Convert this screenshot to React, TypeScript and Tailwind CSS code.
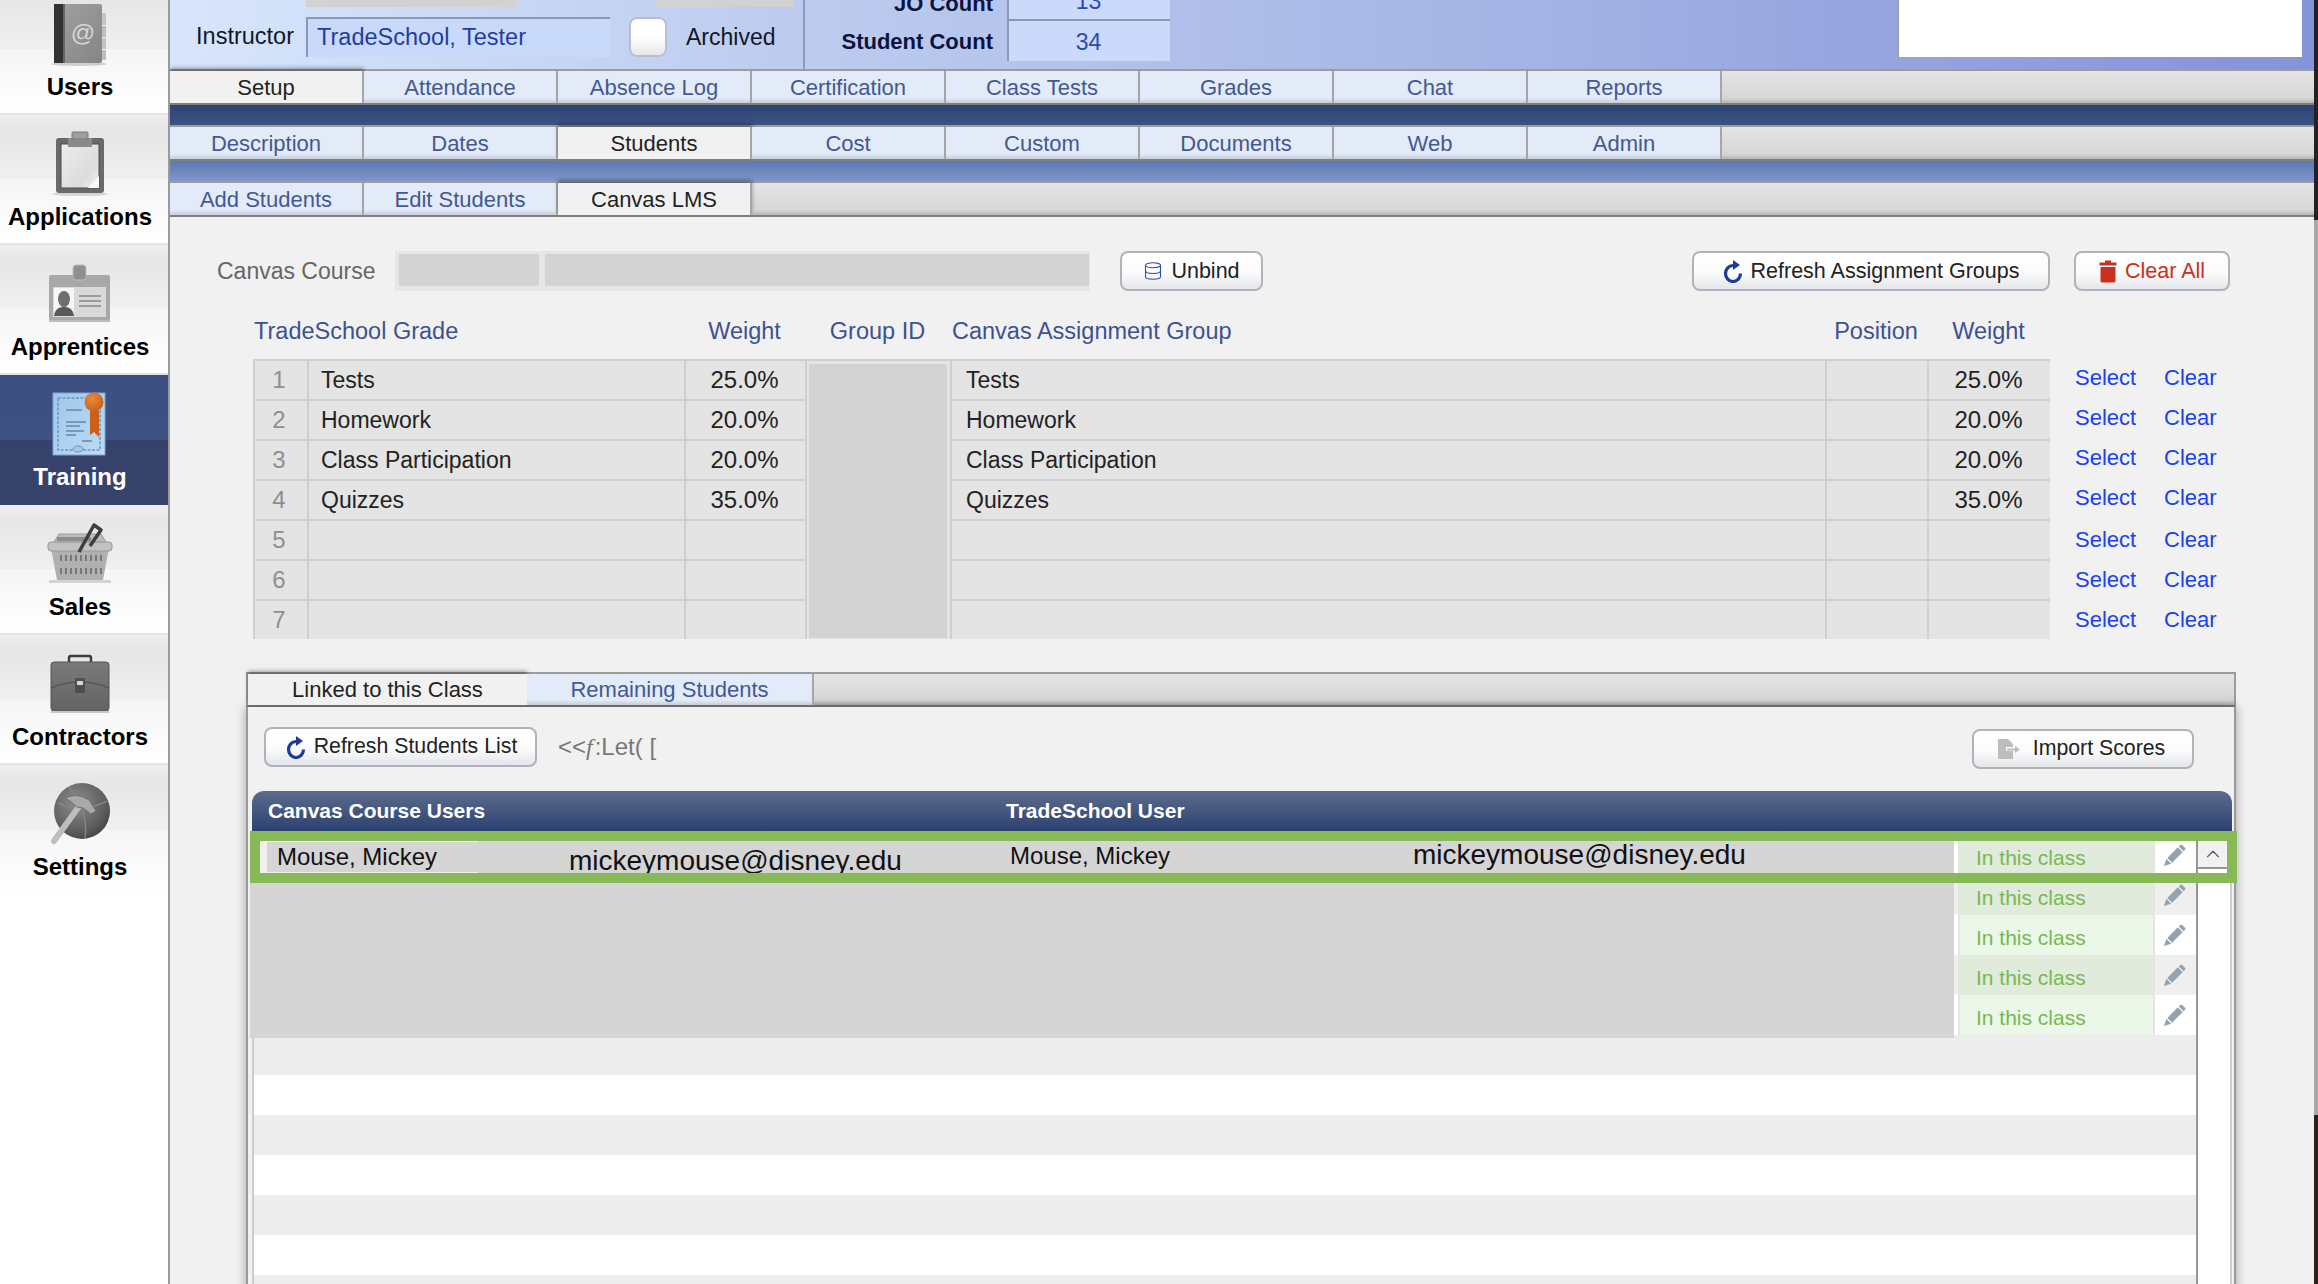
import React from 'react';
import { ChevronUp, Database } from 'lucide-react';

const font = { fontFamily: '"Liberation Sans", Arial, sans-serif' };

const tabs1 = ['Setup', 'Attendance', 'Absence Log', 'Certification', 'Class Tests', 'Grades', 'Chat', 'Reports'];
const tabs2 = ['Description', 'Dates', 'Students', 'Cost', 'Custom', 'Documents', 'Web', 'Admin'];
const tabs3 = ['Add Students', 'Edit Students', 'Canvas LMS'];

const grades = [
    { n: 1, name: 'Tests', weight: '25.0%' },
    { n: 2, name: 'Homework', weight: '20.0%' },
    { n: 3, name: 'Class Participation', weight: '20.0%' },
    { n: 4, name: 'Quizzes', weight: '35.0%' },
    { n: 5, name: '', weight: '' },
    { n: 6, name: '', weight: '' },
    { n: 7, name: '', weight: '' },
];

const BookIcon = () => (
    <svg width="60" height="66" viewBox="0 0 60 66">
        <defs>
            <linearGradient id="bk" x1="0" x2="1" y1="0" y2="1">
                <stop offset="0" stopColor="#a2a2a2" />
                <stop offset="1" stopColor="#858585" />
            </linearGradient>
        </defs>
        <ellipse cx="29" cy="63" rx="28" ry="2" fill="#cfcfcf" />
        <rect x="50" y="12" width="6" height="12" fill="#c4c4c4" />
        <rect x="50" y="25" width="6" height="11" fill="#bdbdbd" />
        <rect x="50" y="37" width="6" height="11" fill="#c4c4c4" />
        <rect x="50" y="49" width="6" height="10" fill="#bdbdbd" />
        <rect x="4" y="3" width="48" height="59" rx="2" fill="url(#bk)" />
        <rect x="4" y="3" width="9" height="59" fill="#333" />
        <rect x="13" y="3" width="2" height="59" fill="#666" />
        <text x="33" y="40" textAnchor="middle" fontSize="24" fill="#d6d6d6" fontFamily="Liberation Sans">@</text>
    </svg>
);

const ClipboardIcon = () => (
    <svg width="60" height="66" viewBox="0 0 60 66">
        <defs>
            <linearGradient id="cp" x1="0" x2="1" y1="0" y2="1">
                <stop offset="0" stopColor="#ededed" />
                <stop offset="0.7" stopColor="#dcdcdc" />
                <stop offset="1" stopColor="#f4f4f4" />
            </linearGradient>
        </defs>
        <ellipse cx="30" cy="63" rx="28" ry="2" fill="#d4d4d4" />
        <rect x="6" y="7" width="48" height="55" rx="3" fill="#6a6a6a" />
        <rect x="11" y="13" width="38" height="44" fill="url(#cp)" stroke="#4d4d4d" />
        <path d="M38 57 L49 45 V57 Z" fill="#fafafa" />
        <rect x="18" y="7" width="24" height="9" rx="1" fill="#8a8a8a" />
        <rect x="22" y="1" width="16" height="7" rx="1" fill="#9e9e9e" stroke="#7a7a7a" />
    </svg>
);

const BadgeIcon = () => (
    <svg width="64" height="60" viewBox="0 0 64 60">
        <rect x="1" y="11" width="61" height="46" rx="2" fill="#a8a8a8" />
        <rect x="1" y="56" width="61" height="2" fill="#bbbbbb" />
        <rect x="25" y="1" width="13" height="15" rx="3" fill="#8f8f8f" stroke="#bdbdbd" />
        <rect x="5" y="23" width="53" height="30" fill="#d9d9d9" />
        <rect x="6" y="24" width="20" height="28" fill="#f6f6f6" />
        <ellipse cx="16" cy="35" rx="6" ry="8" fill="#6f6f6f" />
        <path d="M6 52 C7 44 12 43 16 43 C20 43 25 44 26 52 Z" fill="#5a5a5a" />
        <path d="M31 32 H53 M31 37 H53 M31 42 H53" stroke="#9c9c9c" strokeWidth="2" />
    </svg>
);

const CertificateIcon = () => (
    <svg width="56" height="66" viewBox="0 0 56 66">
        <defs>
            <linearGradient id="ct" x1="0" x2="1" y1="0" y2="1">
                <stop offset="0" stopColor="#9fc6ea" />
                <stop offset="1" stopColor="#bcdcf6" />
            </linearGradient>
            <radialGradient id="rs" cx="0.4" cy="0.35" r="0.7">
                <stop offset="0" stopColor="#ea8a3c" />
                <stop offset="1" stopColor="#c85f18" />
            </radialGradient>
        </defs>
        <rect x="1" y="2" width="52" height="62" fill="url(#ct)" stroke="#7fa4cf" />
        <rect x="6" y="7" width="42" height="52" fill="none" stroke="#6d94c2" strokeWidth="1.5" strokeDasharray="3 1.5" />
        <path d="M14 19 H30 M14 31 H34 M14 35 H28 M14 40 H32 M14 44 H24 M30 50 H40" stroke="#7b98bb" strokeWidth="2" />
        <ellipse cx="26" cy="58" rx="5" ry="3" fill="#a8c8e6" stroke="#6d94c2" />
        <path d="M38 20 V44 L42 41 L47 46 V20 Z" fill="#cf5f16" />
        <circle cx="42" cy="11" r="9.5" fill="url(#rs)" />
    </svg>
);

const BasketIcon = () => (
    <svg width="66" height="64" viewBox="0 0 66 64">
        <rect x="2" y="58" width="62" height="3" fill="#d4d4d4" />
        <path d="M4 26 L10 58 H56 L62 26 Z" fill="#b0b0b0" />
        <rect x="1" y="20" width="64" height="9" rx="3" fill="#c2c2c2" stroke="#9a9a9a" />
        <path d="M7 20 L12 12 H54 L59 20 Z" fill="#bcbcbc" stroke="#9b9b9b" />
        <rect x="10" y="15" width="34" height="4" fill="#8c8c8c" />
        <path d="M13 36 H55 M13 49 H55" stroke="#777777" strokeWidth="6" strokeDasharray="2 3" />
        <path d="M32 30 L47 3 L54 8 L43 24" fill="none" stroke="#3e3e3e" strokeWidth="3.5" strokeLinejoin="round" />
    </svg>
);

const BriefcaseIcon = () => (
    <svg width="62" height="60" viewBox="0 0 62 60">
        <defs>
            <linearGradient id="bc" x1="0" x2="0" y1="0" y2="1">
                <stop offset="0" stopColor="#7a7a7a" />
                <stop offset="1" stopColor="#636363" />
            </linearGradient>
        </defs>
        <path d="M20 8 V4 Q20 2 22 2 H40 Q42 2 42 4 V8" fill="none" stroke="#3d3d3d" strokeWidth="2.5" />
        <rect x="2" y="8" width="58" height="49" rx="3" fill="url(#bc)" stroke="#555" />
        <path d="M2 34 Q31 22 60 34" fill="none" stroke="#555" strokeWidth="1.5" />
        <rect x="26" y="24" width="10" height="15" rx="1" fill="#4f4f4f" />
        <rect x="28" y="27" width="6" height="4" fill="#d8d8d8" />
        <rect x="2" y="57" width="58" height="2" fill="#c8c8c8" />
    </svg>
);

const SettingsIcon = () => (
    <svg width="62" height="66" viewBox="0 0 62 66">
        <defs>
            <radialGradient id="gl" cx="0.4" cy="0.35" r="0.75">
                <stop offset="0" stopColor="#8e8e8e" />
                <stop offset="0.7" stopColor="#5c5c5c" />
                <stop offset="1" stopColor="#3a3a3a" />
            </radialGradient>
        </defs>
        <circle cx="33" cy="30" r="28" fill="url(#gl)" />
        <path d="M10 22 Q30 34 58 20 M20 6 Q40 30 36 58" fill="none" stroke="#858585" strokeWidth="1.5" />
        <path d="M5 60 L31 24" stroke="#bdbdbd" strokeWidth="6" strokeLinecap="round" />
        <path d="M16 17 Q28 11 40 19 L47 30 L42 33 L34 27 L28 26 Q22 20 16 17 Z" fill="#a9a9a9" stroke="#6f6f6f" />
    </svg>
);

const RefreshIcon = () => (
    <svg width="20" height="23" viewBox="0 0 20 23" className="shrink-0">
        <path d="M10 5.5 A7.5 8 0 1 0 17.5 13.5" fill="none" stroke="#1c3a9c" strokeWidth="3.2" />
        <path d="M10 0 L17 5 L10 10 Z" fill="#1c3a9c" />
    </svg>
);

const TrashIcon = () => (
    <svg width="18" height="23" viewBox="0 0 18 23" className="shrink-0">
        <path d="M6 0.5 H12 V2.5 H17.5 V5.5 H0.5 V2.5 H6 Z" fill="#c9301e" />
        <path d="M1.5 7 H16.5 V21 Q16.5 22.5 15 22.5 H3 Q1.5 22.5 1.5 21 Z" fill="#c9301e" />
    </svg>
);

const ImportIcon = () => (
    <svg width="24" height="21" viewBox="0 0 24 21" className="shrink-0">
        <path d="M1 0 H11 L16 5 V8 H9 V12 H16 V20 H1 Z" fill="#bdbdbd" />
        <path d="M10 9.5 H18 V7 L23 10.5 L18 14 V11.5 H10 Z" fill="#bdbdbd" />
    </svg>
);

const PencilIcon = () => (
    <svg width="23" height="23" viewBox="0 0 24 24" fill="#94a3ad">
        <path d="M1 23 L3.5 15.5 L8.5 20.5 Z" />
        <path d="M4.5 14.5 L15.5 3.5 L20.5 8.5 L9.5 19.5 Z" />
        <path d="M16.5 2.5 L18 1 Q19 0 20 1 L23 4 Q24 5 23 6 L21.5 7.5 Z" />
    </svg>
);

const NavItem = ({ label, icon, active, first, last }: { label: string; icon: React.ReactNode; active?: boolean; first?: boolean; last?: boolean }) => (
    <div
        className={`flex h-[130px] shrink-0 flex-col items-center pr-2 ${first ? '-mt-[15px]' : ''} ${
            active
                ? 'bg-[linear-gradient(#3b4f80_0%,#3d5183_50%,#36426c_50%,#374369_100%)] text-white'
                : `${last ? '' : 'border-b-2 border-[#e4e4e4]'} bg-[linear-gradient(#efefef_0%,#e6e6e6_12%,#f0f0f0_50%,#f5f5f5_50%,#ffffff_100%)] text-black`
        }`}
    >
        <div className="mt-4 flex h-[66px] items-center justify-center">{icon}</div>
        <div className="mt-[5px] text-[24px] leading-[30px] font-bold">{label}</div>
    </div>
);

const Sidebar = () => (
    <div className="flex w-[170px] shrink-0 flex-col overflow-hidden border-r-2 border-[#9a9a9a] bg-white">
        <NavItem first label="Users" icon={<BookIcon />} />
        <NavItem label="Applications" icon={<ClipboardIcon />} />
        <NavItem label="Apprentices" icon={<BadgeIcon />} />
        <NavItem active label="Training" icon={<CertificateIcon />} />
        <NavItem label="Sales" icon={<BasketIcon />} />
        <NavItem label="Contractors" icon={<BriefcaseIcon />} />
        <NavItem last label="Settings" icon={<SettingsIcon />} />
    </div>
);

const TabRow = ({ items, active }: { items: string[]; active: string }) => (
    <div className="flex h-9 shrink-0 border-y-2 border-t-[#9c9c9c] border-b-[#7f7f7f] bg-[linear-gradient(#e4e4e4,#d6d6d6_85%,#b4b4b4)]">
        {items.map((t) => (
            <div
                key={t}
                className={`flex w-[194px] items-center justify-center border-r-2 border-[#a6a6a6] text-[22px] ${
                    t === active
                        ? 'bg-[#f1f1f1] text-[#222222] shadow-[0_-3px_4px_rgba(0,0,0,0.35)]'
                        : 'bg-[linear-gradient(#e3ebf8_0%,#e3ebf8_84%,#c6cdd9_100%)] text-[#44598f]'
                }`}
            >
                {t}
            </div>
        ))}
    </div>
);

const HeaderStrip = () => (
    <div className="flex h-[69px] shrink-0 bg-[linear-gradient(90deg,#d8e5fc_0%,#bccbee_30%,#a9b7e6_58%,#95a3df_81%,#8593d8_100%)] text-[23px]">
        <div className="flex w-[633px] shrink-0 flex-col">
            <div className="flex h-[7px]">
                <div className="ml-[136px] w-[211px] bg-[#d2d2d2]" />
                <div className="ml-[138px] w-[138px] bg-[#d2d2d2]" />
            </div>
            <div className="mt-[10px] flex h-10 items-center">
                <div className="w-[124px] text-right text-[23.5px] text-[#111827]">Instructor</div>
                <div className="ml-3 flex h-10 w-[304px] items-center border-t-2 border-l-2 border-[#8c98b8] bg-[#c9d9f9] pl-[9px] text-[23.5px] text-[#1f3f9f]">
                    TradeSchool, Tester
                </div>
                <div className="ml-[19px] h-10 w-[38px] rounded-lg border-2 border-[#b7bfd3] bg-[linear-gradient(#ffffff_50%,#e6e6e6)]" />
                <div className="ml-[19px] text-[#111827]">Archived</div>
            </div>
        </div>
        <div className="-mt-[17px] flex w-[204px] shrink-0 flex-col border-l-2 border-[#8f98b8] text-[22px] font-bold text-[#0b1440]">
            <div className="flex h-[40px] items-center justify-end pr-[14px]">JO Count</div>
            <div className="flex h-[36px] items-center justify-end pr-[14px]">Student Count</div>
        </div>
        <div className="-mt-[17px] flex h-[78px] w-[163px] shrink-0 flex-col border-l-2 border-[#8f98b8] bg-[#cbdafb] text-[#2a4bb0]">
            <div className="flex h-[38px] items-center justify-center border-b-2 border-[#8f98a8] pr-[2px]">13</div>
            <div className="flex h-[38px] items-center justify-center pt-1 pr-[2px]">34</div>
        </div>
        <div className="mr-3 ml-auto h-[57px] w-[404px] border-l border-[#999999] bg-white" />
    </div>
);

const Btn = ({ children, className }: { children: React.ReactNode; className: string }) => (
    <div
        className={`flex h-10 shrink-0 items-center justify-center gap-2 rounded-lg border-2 border-[#b0b3bd] bg-[linear-gradient(#ffffff_0%,#fbfbfb_55%,#e4e6e9_100%)] ${className}`}
    >
        {children}
    </div>
);

const CourseRow = () => (
    <div className="flex h-10 items-center pr-[84px] pl-[47px]">
        <div className="w-[178px] shrink-0 text-[23px] text-[#666666]">Canvas Course</div>
        <div className="flex h-10 w-[695px] shrink-0 bg-[#e6e6e6] pt-[3px] pr-[1px] pb-[5px] pl-[4px]">
            <div className="w-[140px] bg-[#d3d3d3]" />
            <div className="ml-[6px] flex-1 bg-[#d3d3d3]" />
        </div>
        <Btn className="ml-[30px] w-[143px] text-[21.5px] text-[#222222]">
            <Database size={20} strokeWidth={1.3} color="#2f4aa8" />
            Unbind
        </Btn>
        <Btn className="ml-auto w-[358px] text-[21.5px] text-[#222222]">
            <RefreshIcon />
            Refresh Assignment Groups
        </Btn>
        <Btn className="ml-6 w-[156px] text-[21.5px] text-[#c9301e]">
            <TrashIcon />
            Clear All
        </Btn>
    </div>
);

const colClass = 'grid-cols-[54px_377px_121px_145px_875px_102px_123px_1fr]';
const cell = 'flex h-10 items-center border-t-2 border-l-2 border-[#cfcfcf] bg-[#e4e4e4]';

const GradeTable = () => (
    <div className="pl-[83px]">
        <div className={`grid h-[68px] items-center pt-[14px] text-[23.5px] text-[#3e5190] ${colClass}`}>
            <div className="col-span-2 pl-px">TradeSchool Grade</div>
            <div className="text-center">Weight</div>
            <div className="text-center">Group ID</div>
            <div className="pl-[2px]">Canvas Assignment Group</div>
            <div className="text-center">Position</div>
            <div className="text-center">Weight</div>
            <div />
        </div>
        <div className={`grid grid-rows-[repeat(7,40px)] ${colClass}`}>
            {grades.map((g, i) => (
                <React.Fragment key={g.n}>
                    <div className={`${cell} justify-center pr-1 text-[24px] text-[#8f8f8f]`}>{g.n}</div>
                    <div className={`${cell} pl-3 text-[23px] text-[#222222]`}>{g.name}</div>
                    <div className={`${cell} justify-center pr-[2px] text-[24px] text-[#222222]`}>{g.weight}</div>
                    {i === 0 && (
                        <div className="row-span-7 border-t-2 border-l-2 border-[#cfcfcf] bg-[#e4e4e4] pt-[3px] pr-[3px] pb-px pl-[2px]">
                            <div className="h-full bg-[#d3d3d3]" />
                        </div>
                    )}
                    <div className={`${cell} pl-[14px] text-[23px] text-[#222222]`}>{g.name}</div>
                    <div className={cell} />
                    <div className={`${cell} justify-center pr-[2px] text-[24px] text-[#222222]`}>{g.weight}</div>
                    <div className={`flex h-10 items-center pl-[25px] text-[22px] text-[#1a40f0] ${i < 4 ? 'pb-1' : ''}`}>
                        <span className="w-[89px]">Select</span>
                        <span>Clear</span>
                    </div>
                </React.Fragment>
            ))}
        </div>
    </div>
);

const StudentRows = () => (
    <div className="relative mr-[2px] ml-1 flex">
        <div className="w-[1944px] shrink-0 border-l-2 border-[#cccccc] pt-1">
            {[0, 1, 2, 3, 4].map((i) => {
                const dark = i < 2 || i === 3;
                return (
                    <div key={i} className={`flex h-10 ${i % 2 === 1 ? 'bg-[#efefef]' : 'bg-white'}`}>
                        <div className="w-[1706px] border-r-2 border-[#e4e4e4]" />
                        <div
                            className={`flex w-[195px] items-center border-r-2 border-[#e4e4e4] pt-[5px] pl-4 text-[21px] text-[#78b94f] ${
                                dark ? 'bg-[#e0ebdc]' : 'bg-[#ebf7e9]'
                            }`}
                        >
                            In this class
                        </div>
                        <div className="flex flex-1 items-center justify-center pr-[2px]">
                            <PencilIcon />
                        </div>
                    </div>
                );
            })}
            {[0, 1, 2, 3, 4, 5, 6].map((i) => (
                <div key={i} className={`h-10 ${i % 2 === 0 ? 'bg-[#ededed]' : 'bg-white'}`} />
            ))}
        </div>
        <div className="h-[560px] w-[36px] shrink-0 border-x-2 border-r-[#cccccc] border-l-[#969696] bg-white pt-[10px]">
            <div className="flex h-[28px] w-[29px] items-center justify-center border-b-2 border-[#969696] bg-[#f1f1f1]">
                <ChevronUp size={22} strokeWidth={1.2} color="#555555" />
            </div>
        </div>

        {/* redacted block, covers the first rows */}
        <div className="absolute top-[10px] -left-[2px] z-10 h-[197px] w-[1704px] overflow-hidden bg-[#d5d5d5] text-[#111111]">
            <div className="flex h-8">
                <div className="ml-[10px] flex h-[32px] w-[218px] shrink-0 items-center border-y border-l-[7px] border-[#f0f0f0] pl-[10px] text-[24px]">
                    Mouse, Mickey
                </div>
                <div className="ml-[91px] w-[441px] shrink-0 pt-[3px] text-[28px] leading-[34px]">mickeymouse@disney.edu</div>
                <div className="flex h-[30px] w-[403px] shrink-0 items-center text-[24px]">Mouse, Mickey</div>
                <div className="-mt-[2px] text-[28px] leading-[32px]">mickeymouse@disney.edu</div>
            </div>
        </div>

        {/* green selection outline */}
        <div className="pointer-events-none absolute top-0 -left-[2px] z-20 h-[52px] w-[1987px] border-[10px] border-[#87b956]" />
    </div>
);

const StudentsPanel = () => (
    <div className="mt-[33px] ml-[76px] w-[1990px]">
        <div className="flex h-[35px] border-2 border-t-[#9c9c9c] border-r-[#9c9c9c] border-b-[#7f7f7f] border-l-[#9c9c9c] bg-[linear-gradient(#e4e4e4,#d6d6d6_85%,#b4b4b4)]">
            <div className="flex w-[279px] items-center justify-center bg-[#f1f1f1] text-[22px] text-[#222222] shadow-[0_-3px_4px_rgba(0,0,0,0.35)]">
                Linked to this Class
            </div>
            <div className="flex w-[287px] items-center justify-center border-r-2 border-[#a6a6a6] bg-[linear-gradient(#e3ebf8_0%,#e3ebf8_84%,#c6cdd9_100%)] text-[22px] text-[#44598f]">
                Remaining Students
            </div>
        </div>
        <div className="h-[600px] border-x-2 border-[#999999] bg-[#f1f1f1] shadow-[0_0_10px_rgba(0,0,0,0.35)]">
            <div className="flex items-start pt-5 pr-10 pl-4">
                <Btn className="w-[273px] pl-[2px] text-[21.3px] text-[#222222]">
                    <RefreshIcon />
                    Refresh Students List
                </Btn>
                <div className="ml-[21px] flex h-10 items-center text-[24px] text-[#777777]">
                    {'<<'}
                    <i className="pr-[2px]" style={{ fontFamily: '"Liberation Serif", serif' }}>
                        f
                    </i>
                    :Let( [
                </div>
                <Btn className="mt-[2px] ml-auto w-[222px] gap-3 pr-1 text-[21.3px] text-[#222222]">
                    <ImportIcon />
                    Import Scores
                </Btn>
            </div>
            <div className="mt-[22px] mr-[2px] ml-1 flex h-10 items-center rounded-t-xl bg-[linear-gradient(#5c6c8e,#2b4170)] pl-4 text-[21px] font-bold text-white">
                <div className="w-[738px]">Canvas Course Users</div>
                <div>TradeSchool User</div>
            </div>
            <StudentRows />
        </div>
    </div>
);

const App: React.FC = () => {
    return (
        <div className="flex h-[1284px] w-[2318px] overflow-hidden bg-[#f1f1f1]" style={font}>
            <Sidebar />
            <div className="flex w-[2144px] shrink-0 flex-col overflow-hidden">
                <HeaderStrip />
                <TabRow items={tabs1} active="Setup" />
                <div className="h-5 shrink-0 bg-[linear-gradient(#2c4475,#3c5283)]" />
                <TabRow items={tabs2} active="Students" />
                <div className="h-5 shrink-0 bg-[linear-gradient(#5d79b1,#7e96ca)]" />
                <TabRow items={tabs3} active="Canvas LMS" />
                <div className="flex-1 pt-[34px]">
                    <CourseRow />
                    <GradeTable />
                    <StudentsPanel />
                </div>
            </div>
            <div className="w-1 shrink-0 bg-[linear-gradient(#222222_0,#222222_220px,#a8a8a8_220px,#a8a8a8_1115px,#2a2418_1115px)]" />
        </div>
    );
};

export default App;
